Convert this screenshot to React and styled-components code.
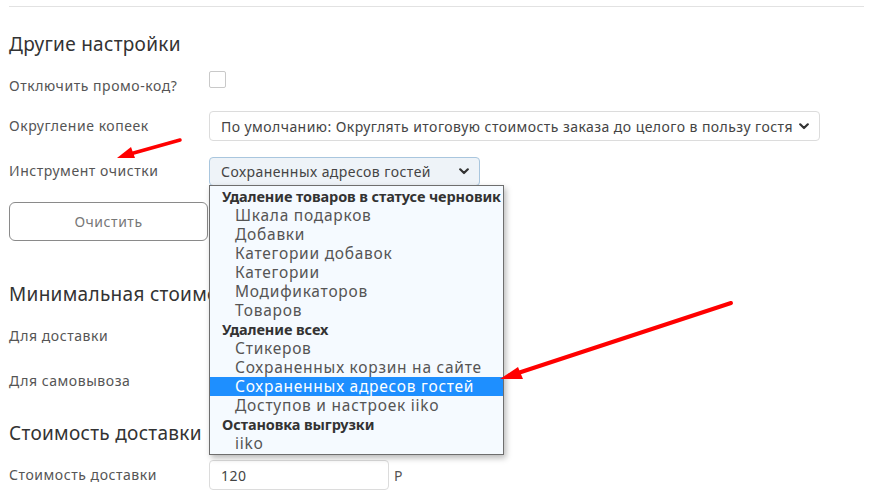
import React from "react";
import styled, { createGlobalStyle } from "styled-components";

const GlobalStyle = createGlobalStyle`
  html, body {
    margin: 0;
    padding: 0;
    background: #fff;
  }
  body {
    font-family: "Noto Sans", "DejaVu Sans", sans-serif;
    font-size: 14px;
    letter-spacing: 0.55px;
    color: #555;
  }
`;

const Page = styled.div`
  position: relative;
  width: 873px;
  height: 495px;
  overflow: hidden;
  padding: 0 9px;
  box-sizing: border-box;
`;

const Divider = styled.div`
  height: 1px;
  background: #e2e2e2;
  margin-top: 6px;
`;

const Heading = styled.h3`
  margin: ${(p) => p.$top}px 0 0;
  font-size: 19px;
  font-weight: 400;
  line-height: 24px;
  letter-spacing: 0.3px;
  color: #333;
  white-space: nowrap;
`;

const Row = styled.div`
  display: grid;
  grid-template-columns: 200px 1fr;
  align-items: ${(p) => p.$align || "center"};
  min-height: 30px;
  margin-top: ${(p) => p.$top}px;
`;

const Label = styled.div`
  color: #555;
  line-height: 30px;
  white-space: nowrap;
`;

const Control = styled.div`
  position: relative;
  display: flex;
  align-items: center;
  gap: 5px;
`;

const Checkbox = styled.span`
  display: block;
  width: 15px;
  height: 15px;
  border: 1px solid #c9c9c9;
  border-radius: 2px;
  background: #fff;
`;

const Select = styled.div`
  box-sizing: border-box;
  width: ${(p) => p.$width}px;
  height: ${(p) => p.$height || 30}px;
  padding: 0 10px 0 11px;
  display: flex;
  align-items: center;
  justify-content: space-between;
  border: 1px solid ${(p) => (p.$open ? "#a9c6de" : "#dcdcdc")};
  border-radius: 4px;
  background: ${(p) => (p.$open ? "#eef3f8" : "#fff")};
  color: #444;
  letter-spacing: 0.44px;
  white-space: nowrap;
`;

const Chevron = () => (
  <svg width="10" height="7" viewBox="0 0 10 7">
    <path d="M1.2 1.3 L5 5 L8.8 1.3" fill="none" stroke="#333" strokeWidth="2.2" strokeLinecap="round" strokeLinejoin="round" />
  </svg>
);

const Listbox = styled.div`
  position: absolute;
  top: 28px;
  left: 0;
  z-index: 5;
  width: 295px;
  box-sizing: border-box;
  padding: 1px 0;
  background: #f5faff;
  border: 1px solid #6e6e6e;
  box-shadow: 2px 3px 6px rgba(0, 0, 0, 0.28);
`;

const Option = styled.div`
  height: 19px;
  line-height: 19px;
  padding-left: ${(p) => (p.$group ? 12 : 25)}px;
  font-size: ${(p) => (p.$group ? 14.5 : 15.5)}px;
  letter-spacing: ${(p) => (p.$group ? -0.1 : 0.75)}px;
  font-weight: ${(p) => (p.$group ? 700 : 400)};
  color: ${(p) => (p.$selected ? "#fff" : p.$group ? "#333" : "#555")};
  background: ${(p) => (p.$selected ? "#1e8fff" : "transparent")};
  white-space: nowrap;
`;

const Button = styled.button`
  box-sizing: border-box;
  width: 199px;
  height: 39px;
  border: 1px solid #8a8a8a;
  border-radius: 6px;
  background: #fff;
  color: #777;
  font: inherit;
  font-size: 14px;
  letter-spacing: 0.55px;
`;

const Input = styled.div`
  box-sizing: border-box;
  width: 180px;
  height: 30px;
  padding: 0 11px;
  display: flex;
  align-items: center;
  border: 1px solid #dcdcdc;
  border-radius: 4px;
  color: #444;
`;

const Unit = styled.span`
  color: #555;
`;

const Annotations = styled.svg`
  position: absolute;
  top: 0;
  left: 0;
  z-index: 10;
  pointer-events: none;
`;

const options = [
  { text: "Удаление товаров в статусе черновик", group: true },
  { text: "Шкала подарков" },
  { text: "Добавки" },
  { text: "Категории добавок" },
  { text: "Категории" },
  { text: "Модификаторов" },
  { text: "Товаров" },
  { text: "Удаление всех", group: true },
  { text: "Стикеров" },
  { text: "Сохраненных корзин на сайте" },
  { text: "Сохраненных адресов гостей", selected: true },
  { text: "Доступов и настроек iiko" },
  { text: "Остановка выгрузки", group: true },
  { text: "iiko" },
];

export default function App() {
  return (
    <>
      <GlobalStyle />
      <Page>
        <Divider />
        <Heading $top={25}>Другие настройки</Heading>

        <Row $top={15} $align="start">
          <Label>Отключить промо-код?</Label>
          <Control>
            <Checkbox />
          </Control>
        </Row>

        <Row $top={10}>
          <Label>Округление копеек</Label>
          <Control>
            <Select $width={611}>
              По умолчанию: Округлять итоговую стоимость заказа до целого в пользу гостя
              <Chevron />
            </Select>
          </Control>
        </Row>

        <Row $top={15}>
          <Label>Инструмент очистки</Label>
          <Control>
            <Select $width={271} $height={29} $open>
              Сохраненных адресов гостей
              <Chevron />
            </Select>
            <Listbox>
              {options.map((o) => (
                <Option key={o.text} $group={o.group} $selected={o.selected}>
                  {o.text}
                </Option>
              ))}
            </Listbox>
          </Control>
        </Row>

        <Row $top={16}>
          <Button>Очистить</Button>
        </Row>

        <Heading $top={41}>Минимальная стоимость</Heading>

        <Row $top={15}>
          <Label>Для доставки</Label>
          <Control>
            <Input />
          </Control>
        </Row>

        <Row $top={15}>
          <Label>Для самовывоза</Label>
          <Control>
            <Input />
          </Control>
        </Row>

        <Heading $top={25}>Стоимость доставки</Heading>

        <Row $top={15}>
          <Label>Стоимость доставки</Label>
          <Control>
            <Input>120</Input>
            <Unit>Р</Unit>
          </Control>
        </Row>

        <Annotations width="873" height="495" viewBox="0 0 873 495">
          <line x1="180" y1="140" x2="130" y2="154" stroke="#f00" strokeWidth="3.5" strokeLinecap="round" />
          <polygon points="117,158 131,147 135,158" fill="#f00" />
          <line x1="731" y1="303" x2="515" y2="374" stroke="#f00" strokeWidth="4" strokeLinecap="round" />
          <polygon points="500,379 518,367 523,379" fill="#f00" />
        </Annotations>
      </Page>
    </>
  );
}
